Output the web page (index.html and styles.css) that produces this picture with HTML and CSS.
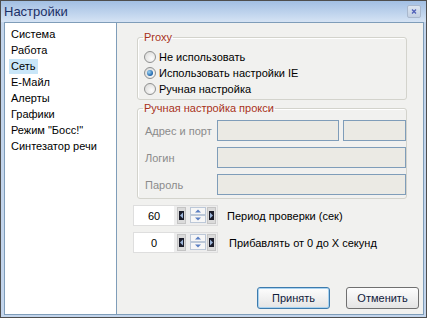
FILE: index.html
```html
<!DOCTYPE html>
<html>
<head>
<meta charset="utf-8">
<link rel="stylesheet" href="styles.css">
</head>
<body>
<div class="window">
  <div class="titlebar">
    <span class="title">Настройки</span>
    <span class="close"><svg width="14" height="13" viewBox="0 0 14 13"><path d="M5 4.5 L9 8.5 M9 4.5 L5 8.5" stroke="#4f5fb8" stroke-width="1.3"/></svg></span>
  </div>
  <div class="client">
    <ul class="nav">
      <li>Система</li>
      <li>Работа</li>
      <li><span class="sel">Сеть</span></li>
      <li>Е-Майл</li>
      <li>Алерты</li>
      <li>Графики</li>
      <li>Режим "Босс!"</li>
      <li>Синтезатор речи</li>
    </ul>
    <div class="panel">
      <fieldset class="group proxy">
        <legend>Proxy</legend>
        <div class="radio-row"><span class="radio"></span>Не использовать</div>
        <div class="radio-row"><span class="radio on"></span>Использовать настройки IE</div>
        <div class="radio-row"><span class="radio"></span>Ручная настройка</div>
      </fieldset>
      <fieldset class="group manual">
        <legend>Ручная настройка прокси</legend>
        <div class="form-row"><span class="lbl">Адрес и порт</span><span class="inp addr"></span><span class="inp port"></span></div>
        <div class="form-row"><span class="lbl">Логин</span><span class="inp wide"></span></div>
        <div class="form-row"><span class="lbl">Пароль</span><span class="inp wide"></span></div>
      </fieldset>
      <div class="spin-row">
        <div class="spin"><span class="num">60</span>
          <svg width="43" height="19" viewBox="0 0 43 19">
            <rect width="43" height="19" fill="#ededed"/>
            <rect x="3.5" y="1.5" width="8" height="16" fill="#dadada" stroke="#c4c4c4"/>
            <rect x="5" y="5" width="5" height="9" fill="#1a1c2a"/>
            <path d="M9 6.5 L6 9.5 L9 12.5Z" fill="#9db6da"/>
            <rect x="16.5" y="1.5" width="15" height="7" fill="#f6f6f6" stroke="#bcc8d8"/>
            <rect x="16.5" y="9.5" width="15" height="7" fill="#f6f6f6" stroke="#bcc8d8"/>
            <path d="M24 3.5 L27 6.5 L21 6.5Z" fill="#5a7fc2"/>
            <path d="M21 11.5 L27 11.5 L24 14.5Z" fill="#5a7fc2"/>
            <rect x="33.5" y="1.5" width="8" height="16" fill="#dadada" stroke="#c4c4c4"/>
            <rect x="35" y="5" width="5" height="9" fill="#1a1c2a"/>
            <path d="M36 6.5 L39 9.5 L36 12.5Z" fill="#9db6da"/>
          </svg>
        </div>
        <span class="spin-label">Период проверки (сек)</span>
      </div>
      <div class="spin-row">
        <div class="spin"><span class="num">0</span>
          <svg width="43" height="19" viewBox="0 0 43 19">
            <rect width="43" height="19" fill="#ededed"/>
            <rect x="3.5" y="1.5" width="8" height="16" fill="#dadada" stroke="#c4c4c4"/>
            <rect x="5" y="5" width="5" height="9" fill="#1a1c2a"/>
            <path d="M9 6.5 L6 9.5 L9 12.5Z" fill="#9db6da"/>
            <rect x="16.5" y="1.5" width="15" height="7" fill="#f6f6f6" stroke="#bcc8d8"/>
            <rect x="16.5" y="9.5" width="15" height="7" fill="#f6f6f6" stroke="#bcc8d8"/>
            <path d="M24 3.5 L27 6.5 L21 6.5Z" fill="#5a7fc2"/>
            <path d="M21 11.5 L27 11.5 L24 14.5Z" fill="#5a7fc2"/>
            <rect x="33.5" y="1.5" width="8" height="16" fill="#dadada" stroke="#c4c4c4"/>
            <rect x="35" y="5" width="5" height="9" fill="#1a1c2a"/>
            <path d="M36 6.5 L39 9.5 L36 12.5Z" fill="#9db6da"/>
          </svg>
        </div>
        <span class="spin-label second">Прибавлять от 0 до X секунд</span>
      </div>
      <div class="buttons">
        <span class="btn default">Принять</span>
        <span class="btn">Отменить</span>
      </div>
    </div>
  </div>
</div>
</body>
</html>
```

FILE: styles.css
```css
html, body {
  margin: 0;
  padding: 0;
}
body {
  font-family: "Liberation Sans", Arial, sans-serif;
  font-size: 11px;
  color: #000;
  background: #fff;
}
.window {
  width: 427px;
  height: 318px;
  box-sizing: border-box;
  border: 1px solid #4e4e4e;
  background: #c3d5ec;
  display: flex;
  flex-direction: column;
}
.titlebar {
  height: 21px;
  flex: none;
  display: flex;
  align-items: center;
  justify-content: space-between;
  padding: 0 5px 0 3px;
  background: linear-gradient(#a2bfe3, #d5e3f4);
}
.title {
  font-size: 13px;
  color: #1c2f66;
}
.close {
  width: 14px;
  height: 13px;
  box-sizing: border-box;
  border: 1px solid #a9b8cd;
  border-radius: 2px;
  background: linear-gradient(#dce5f0, #c3d0e2);
  display: flex;
}
.close svg {
  margin: -1px;
}
.client {
  flex: 1;
  min-height: 0;
  margin: 0 2px 2px 3px;
  border: 1px solid #7f9db9;
  display: flex;
}
.nav {
  list-style: none;
  margin: 0;
  padding: 3px 0 0 0;
  width: 111px;
  flex: none;
  background: #fff;
  border-right: 1px solid #7f9db9;
}
.nav li {
  height: 16px;
  line-height: 16px;
  padding-left: 6px;
  white-space: nowrap;
}
.nav .sel {
  display: inline-block;
  margin-left: -2px;
  padding: 0 3px 0 2px;
  height: 15px;
  line-height: 15px;
  background: #c9e6f8;
}
.panel {
  flex: 1;
  background: #f1f1ef;
  padding: 8px 4px 5px 16px;
  display: flex;
  flex-direction: column;
}
.group {
  margin: 0 0 0 4px;
  width: 270px;
  box-sizing: border-box;
  border: 1px solid #d3d3cc;
  border-radius: 3px;
  box-shadow: inset 1px 1px 0 #fff;
  min-width: 0;
}
.group legend {
  font-size: 11px;
  line-height: 13px;
  padding: 0 1px;
  margin-left: -1px;
  color: #a8321a;
}
.proxy {
  padding: 5px 0 2px 6px;
}
.manual {
  margin-top: 2px;
  padding: 5px 0 3px 6px;
}
.radio-row {
  display: flex;
  align-items: center;
  height: 16px;
  gap: 3px;
}
.radio {
  width: 12px;
  height: 12px;
  box-sizing: border-box;
  border-radius: 50%;
  border: 1px solid #8f9090;
  background: radial-gradient(circle at 65% 65%, #fcfcfc, #d6d6d4);
  display: flex;
  align-items: center;
  justify-content: center;
}
.radio.on::after {
  content: "";
  width: 6px;
  height: 6px;
  border-radius: 50%;
  background: radial-gradient(circle at 35% 35%, #9fd6f5, #1c62a9 70%);
}
.form-row {
  display: flex;
  align-items: center;
  height: 21px;
}
.form-row + .form-row {
  margin-top: 6px;
}
.lbl {
  width: 73px;
  box-sizing: border-box;
  padding-left: 1px;
  color: #8b8b8b;
  flex: none;
  white-space: nowrap;
}
.inp {
  height: 21px;
  box-sizing: border-box;
  border: 1px solid #7f9db9;
  background: #ebeae4;
  flex: none;
}
.addr {
  width: 122px;
  margin-right: 4px;
}
.port {
  width: 63px;
}
.wide {
  width: 189px;
}
.spin-row {
  display: flex;
  align-items: center;
  height: 21px;
  margin-top: 6px;
}
.spin {
  width: 85px;
  height: 21px;
  box-sizing: border-box;
  border: 1px solid #dedede;
  background: #fff;
  display: flex;
  align-items: center;
}
.num {
  width: 40px;
  text-align: center;
}
.spin svg {
  display: block;
}
.spin-label {
  margin-left: 9px;
}
.spin-label.second {
  margin-left: 11px;
}
.buttons {
  margin-top: auto;
  display: flex;
  justify-content: flex-end;
  gap: 16px;
}
.btn {
  width: 73px;
  height: 22px;
  box-sizing: border-box;
  border: 1px solid #707070;
  border-radius: 3px;
  background: linear-gradient(#fdfdfd, #e4e4e4);
  display: flex;
  align-items: center;
  justify-content: center;
  color: #10203c;
}
.btn.default {
  border-color: #3d7bad;
  box-shadow: inset 0 0 0 1px #a8d2f0;
}
```
